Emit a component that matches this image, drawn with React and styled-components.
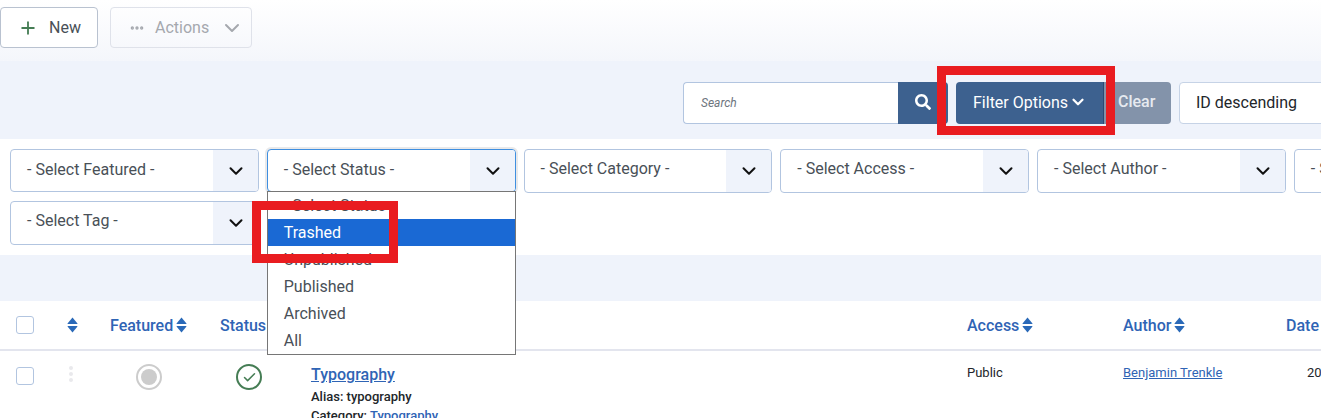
import React from "react";
import styled, {createGlobalStyle} from "styled-components";
import {Check, ChevronDown, Ellipsis, Plus} from "lucide-react";
import {FaSearch} from "react-icons/fa";

const selects = [
    {label: '- Select Featured -'},
    {label: '- Select Status -', open: true},
    {label: '- Select Category -', tall: true},
    {label: '- Select Access -', tall: true},
    {label: '- Select Author -', tall: true},
    {label: '- Select Language -', tall: true},
    {label: '- Select Tag -', tall: true},
]
const statusOptions = ['- Select Status -', 'Trashed', 'Unpublished', 'Published', 'Archived', 'All']

export default function App() {
    return (
        <Page>
            <GlobalStyle/>
            <Toolbar>
                <NewButton><Plus size={20} color="#457d54" strokeWidth={2.2}/>New</NewButton>
                <ActionsButton>
                    <Ellipsis size={16} color="#a5a8ae" strokeWidth={3}/>
                    <span>Actions</span>
                    <ChevronDown size={24} color="#a5a8ae" strokeWidth={2}/>
                </ActionsButton>
            </Toolbar>
            <SearchBand>
                <SearchInput>Search</SearchInput>
                <SearchButton><FaSearch size={16} color="#fff"/></SearchButton>
                <FilterButton>Filter Options<ChevronDown size={18} strokeWidth={3}/></FilterButton>
                <ClearButton>Clear</ClearButton>
                <SortSelect>ID descending</SortSelect>
            </SearchBand>
            <FilterGrid>
                {selects.map((s) => <FilterSelect key={s.label} {...s}/>)}
            </FilterGrid>
            <Spacer/>
            <TableHead>
                <CheckBox/>
                <HeadCell><SortIcon/></HeadCell>
                <HeadCell>Featured <SortIcon/></HeadCell>
                <HeadCell>Status</HeadCell>
                <span/>
                <HeadCell>Access <SortIcon/></HeadCell>
                <HeadCell>Author <SortIcon/></HeadCell>
                <HeadCell>Date</HeadCell>
            </TableHead>
            <TableRow>
                <CheckBox/>
                <Grip><i/><i/><i/></Grip>
                <FeaturedIcon><i/></FeaturedIcon>
                <StatusIcon><Check size={15} color="#457d54" strokeWidth={2.4}/></StatusIcon>
                <TitleCell>
                    <TitleLink>Typography</TitleLink>
                    <Meta>Alias: typography</Meta>
                    <Meta>Category: <a>Typography</a></Meta>
                </TitleCell>
                <PlainCell>Public</PlainCell>
                <PlainCell><a>Benjamin Trenkle</a></PlainCell>
                <DateCell>2022</DateCell>
            </TableRow>
            <Highlight $left={937} $top={66} $width={178} $height={69}/>
            <Highlight $left={252} $top={201} $width={146} $height={62}/>
        </Page>
    )
}

function FilterSelect({label, open, tall}) {
    return (
        <SelectBox $open={open} $tall={tall}>
            <SelectLabel $tall={tall}>{label}</SelectLabel>
            <SelectArrow><ChevronDown size={22} color="#111" strokeWidth={2.2}/></SelectArrow>
            {open &&
                <OptionList>
                    {statusOptions.map((o) => (
                        <Option key={o} $selected={o === 'Trashed'}>{o}</Option>
                    ))}
                </OptionList>
            }
        </SelectBox>
    )
}

function SortIcon() {
    return (
        <svg width="11" height="16" viewBox="0 0 11 16" fill="#2a69b8">
            <path d="M5.5 0.5 L10.5 6.5 Q10.5 7 10 7 L1 7 Q0.5 7 0.5 6.5 Z"/>
            <path d="M1 9 L10 9 Q10.5 9 10.5 9.5 L5.5 15.5 L0.5 9.5 Q0.5 9 1 9 Z"/>
        </svg>
    )
}

const GlobalStyle = createGlobalStyle`
    body {
        margin: 0;
        font-family: Roboto, "Liberation Sans", sans-serif;
        background: #fff;
    }
`;

const Page = styled.div`
    position: relative;
    width: 1321px;
    height: 418px;
    overflow: hidden;
    background: #fff;
    color: #495057;
    font-size: 16px;
`;

const Toolbar = styled.div`
    display: flex;
    align-items: flex-start;
    gap: 12px;
    height: 61px;
    padding-top: 7px;
    box-sizing: border-box;
    background: linear-gradient(#fff, #f4f6fb);
    box-shadow: 0 1px 3px rgba(120, 135, 170, 0.2);
`;

const NewButton = styled.button`
    display: flex;
    align-items: center;
    gap: 11px;
    width: 98px;
    height: 41px;
    padding: 0 0 0 17px;
    background: #fff;
    border: 1px solid #b9c2d0;
    border-radius: 4px;
    color: #495057;
    font: 16px Roboto, sans-serif;
`;

const ActionsButton = styled.button`
    display: flex;
    align-items: center;
    width: 142px;
    height: 41px;
    padding: 0 0 0 18px;
    background: transparent;
    border: 1px solid #dfe2ea;
    border-radius: 4px;
    color: #a5a8ae;
    font: 16px Roboto, sans-serif;
    span {
        margin: 0 11px 0 10px;
    }
`;

const SearchBand = styled.div`
    display: flex;
    align-items: flex-start;
    width: 1600px;
    height: 78px;
    padding: 21px 0 0 683px;
    box-sizing: border-box;
    background: #eff3fb;
`;

const SearchInput = styled.div`
    flex: none;
    width: 215px;
    height: 42px;
    box-sizing: border-box;
    padding-left: 17px;
    line-height: 41px;
    background: #fff;
    border: 1px solid #b2c5e0;
    border-right: 0;
    border-radius: 4px 0 0 4px;
    color: #6d757e;
    font-size: 12px;
    font-style: italic;
`;

const SearchButton = styled.div`
    flex: none;
    display: flex;
    align-items: center;
    justify-content: center;
    width: 50px;
    height: 42px;
    padding-bottom: 2px;
    box-sizing: border-box;
    background: #3d618f;
    border-radius: 0 4px 4px 0;
`;

const FilterButton = styled.div`
    flex: none;
    display: flex;
    align-items: center;
    gap: 1px;
    width: 148px;
    height: 42px;
    padding: 0 0 2px 17px;
    margin-left: 8px;
    box-sizing: border-box;
    background: #3d618f;
    border-right: 1px solid #2c4a73;
    border-radius: 4px 0 0 4px;
    color: #fff;
    font-size: 16px;
`;

const ClearButton = styled.div`
    flex: none;
    width: 67px;
    height: 42px;
    box-sizing: border-box;
    padding-left: 14px;
    line-height: 40px;
    background: #8393aa;
    border-radius: 0 4px 4px 0;
    color: #e6eaf0;
    font-weight: 500;
`;

const SortSelect = styled.div`
    flex: none;
    width: 200px;
    height: 42px;
    box-sizing: border-box;
    margin-left: 8px;
    padding-left: 16px;
    line-height: 39px;
    background: #fff;
    border: 1px solid #c6d3e6;
    border-radius: 4px;
    color: #22262a;
`;

const FilterGrid = styled.div`
    display: flex;
    flex-wrap: wrap;
    align-content: flex-start;
    gap: 8px;
    width: 1560px;
    height: 116px;
    padding: 10px 0 0 10px;
    box-sizing: border-box;
`;

const SelectBox = styled.div`
    position: relative;
    display: flex;
    width: 248.75px;
    height: ${props => props.$tall ? '44px' : '43px'};
    box-sizing: border-box;
    background: #fff;
    border: 1px solid ${props => props.$open ? '#3f8fe0' : '#b2c5e0'};
    border-radius: 4px;
    box-shadow: ${props => props.$open ? '0 0 0 2px #e9e9ea' : 'none'};
`;

const SelectLabel = styled.div`
    flex: 1;
    padding-left: 16px;
    line-height: ${props => props.$tall ? '37px' : '39px'};
    color: #495057;
    white-space: nowrap;
`;

const SelectArrow = styled.div`
    display: flex;
    align-items: center;
    justify-content: center;
    width: 45px;
    padding-left: 1px;
    box-sizing: border-box;
    border-radius: 0 3px 3px 0;
    background: #eff3fb;
`;

const OptionList = styled.div`
    position: absolute;
    z-index: 2;
    top: 41px;
    left: -1px;
    width: 249px;
    height: 164px;
    box-sizing: border-box;
    background: #fff;
    border: 1px solid #767676;
`;

const Option = styled.div`
    height: 27px;
    padding-left: 16px;
    line-height: 27px;
    background: ${props => props.$selected ? '#1a69d4' : 'transparent'};
    color: ${props => props.$selected ? '#fff' : '#495057'};
`;

const Spacer = styled.div`
    height: 46px;
    background: #eff3fb;
`;

const columns = '51px 43px 110px 91px 656px 156px 163px 1fr';

const TableHead = styled.div`
    display: grid;
    grid-template-columns: ${columns};
    align-items: center;
    height: 50px;
    padding: 0 0 0 16px;
    box-sizing: border-box;
    border-bottom: 2px solid #e3e5ee;
`;

const HeadCell = styled.div`
    display: flex;
    align-items: center;
    gap: 3px;
    color: #2f64b5;
    font-weight: 500;
    white-space: nowrap;
`;

const CheckBox = styled.div`
    width: 16px;
    height: 16px;
    background: #fff;
    border: 1px solid #b2c5e0;
    border-radius: 3px;
`;

const TableRow = styled.div`
    display: grid;
    grid-template-columns: ${columns};
    align-items: start;
    padding: 16px 0 0 16px;
`;

const Grip = styled.div`
    display: flex;
    flex-direction: column;
    gap: 2px;
    padding: 0 0 0 2px;
    margin-top: -1px;
    i {
        width: 4px;
        height: 4px;
        border-radius: 50%;
        background: #e9e9ec;
    }
`;

const FeaturedIcon = styled.div`
    display: flex;
    align-items: center;
    justify-content: center;
    width: 26px;
    height: 26px;
    margin: -3px 0 0 26px;
    box-sizing: border-box;
    border: 2px solid #ccc;
    border-radius: 50%;
    i {
        width: 16px;
        height: 16px;
        border-radius: 50%;
        background: #ccc;
    }
`;

const StatusIcon = styled(FeaturedIcon)`
    margin-left: 16px;
    border-color: #457d54;
`;

const TitleCell = styled.div`
    margin-top: -2px;
    color: #22262a;
`;

const TitleLink = styled.a`
    display: block;
    margin-bottom: 5px;
    color: #2f64b5;
    font-weight: 500;
    text-decoration: underline;
`;

const Meta = styled.div`
    margin-bottom: 4px;
    font-size: 13px;
    font-weight: 500;
    line-height: 15px;
    a {
        color: #2f64b5;
    }
`;

const PlainCell = styled.div`
    margin-top: -1px;
    font-size: 13px;
    line-height: 14px;
    color: #22262a;
    white-space: nowrap;
    a {
        color: #2f64b5;
        text-decoration: underline;
    }
`;

const DateCell = styled(PlainCell)`
    padding-left: 21px;
`;

const Highlight = styled.div`
    position: absolute;
    z-index: 3;
    left: ${props => props.$left}px;
    top: ${props => props.$top}px;
    width: ${props => props.$width}px;
    height: ${props => props.$height}px;
    box-sizing: border-box;
    border: 9px solid #e91c20;
`;
